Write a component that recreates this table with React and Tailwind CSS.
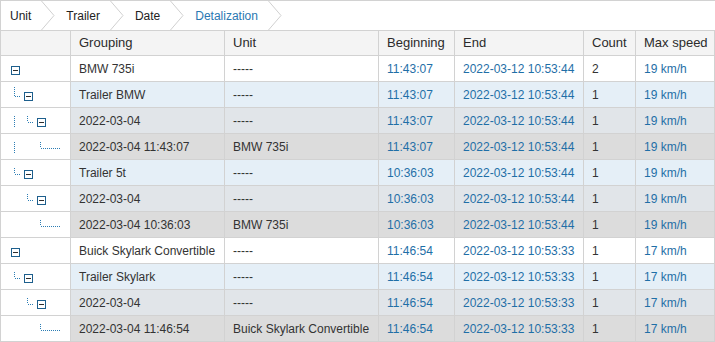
import React from "react";

const rows = [
  { level: 0, name: "BMW 735i", unit: "-----", begin: "11:43:07", end: "2022-03-12 10:53:44", count: "2", speed: "19 km/h", last: false, cont: [] },
  { level: 1, name: "Trailer BMW", unit: "-----", begin: "11:43:07", end: "2022-03-12 10:53:44", count: "1", speed: "19 km/h", last: false, cont: [] },
  { level: 2, name: "2022-03-04", unit: "-----", begin: "11:43:07", end: "2022-03-12 10:53:44", count: "1", speed: "19 km/h", last: true, cont: [1] },
  { level: 3, name: "2022-03-04 11:43:07", unit: "BMW 735i", begin: "11:43:07", end: "2022-03-12 10:53:44", count: "1", speed: "19 km/h", last: true, cont: [1] },
  { level: 1, name: "Trailer 5t", unit: "-----", begin: "10:36:03", end: "2022-03-12 10:53:44", count: "1", speed: "19 km/h", last: true, cont: [] },
  { level: 2, name: "2022-03-04", unit: "-----", begin: "10:36:03", end: "2022-03-12 10:53:44", count: "1", speed: "19 km/h", last: true, cont: [] },
  { level: 3, name: "2022-03-04 10:36:03", unit: "BMW 735i", begin: "10:36:03", end: "2022-03-12 10:53:44", count: "1", speed: "19 km/h", last: true, cont: [] },
  { level: 0, name: "Buick Skylark Convertible", unit: "-----", begin: "11:46:54", end: "2022-03-12 10:53:33", count: "1", speed: "17 km/h", last: true, cont: [] },
  { level: 1, name: "Trailer Skylark", unit: "-----", begin: "11:46:54", end: "2022-03-12 10:53:33", count: "1", speed: "17 km/h", last: true, cont: [] },
  { level: 2, name: "2022-03-04", unit: "-----", begin: "11:46:54", end: "2022-03-12 10:53:33", count: "1", speed: "17 km/h", last: true, cont: [] },
  { level: 3, name: "2022-03-04 11:46:54", unit: "Buick Skylark Convertible", begin: "11:46:54", end: "2022-03-12 10:53:33", count: "1", speed: "17 km/h", last: true, cont: [] },
];

const bgByLevel = ["bg-white", "bg-[#e5eff7]", "bg-[#e1e5e9]", "bg-[#dcdcdc]"];

const DOT = "#2c7db4";

function TreeIcon({ level, last, cont }) {
  const leaf = level === 3;
  const vx = 13 * level;
  const bx = 10 + 13 * level;
  return (
    <svg width="69" height="25" viewBox="0 0 69 25" shapeRendering="crispEdges">
      {cont.map((k) => (
        <line key={k} x1={13 * k + 0.5} x2={13 * k + 0.5} y1="8" y2="20" stroke={DOT} strokeDasharray="1 1" />
      ))}
      {level > 0 && (
        <>
          <line x1={vx + 0.5} x2={vx + 0.5} y1={last ? 8 : 5} y2="14" stroke={DOT} strokeDasharray="1 1" />
          <line x1={vx + 1} x2={vx + (leaf ? 21 : 7)} y1="14.5" y2="14.5" stroke={DOT} strokeDasharray="1 1" />
        </>
      )}
      {!leaf && (
        <>
          <rect x={bx + 0.5} y="10.5" width="8" height="8" fill="#ffffff" stroke="#1d5f8d" />
          <rect x={bx + 2} y="14" width="5" height="1" fill="#2e2e2e" />
        </>
      )}
    </svg>
  );
}

const crumbs = ["Unit", "Trailer", "Date", "Detalization"];

export default function App() {
  return (
    <div className="w-[715px] h-[342px] bg-white border-l border-[#d2d2d2] font-['Liberation_Sans',Arial,sans-serif] text-[12px] text-[#333333] overflow-hidden">
      <div className="flex h-[30px] border-t border-[#d2d2d2]">
        {crumbs.map((c, i) => (
          <div key={c} className="flex h-full items-stretch">
            <span
              className={`flex items-center pr-[10px] ${i === 0 ? "pl-[9px]" : "pl-[11px]"} ${
                i === 3 ? "text-[#2a78b2]" : "text-[#222222]"
              }`}
            >
              {c}
            </span>
            <svg width="14" height="29" viewBox="0 0 14 29" className="block">
              <polyline points="0.5,0 13,14.5 0.5,29" fill="none" stroke="#d0d0d0" strokeWidth="1" />
            </svg>
          </div>
        ))}
      </div>
      <div className="grid grid-cols-[70px_154px_154px_76px_129px_52px_79px]">
        {["", "Grouping", "Unit", "Beginning", "End", "Count", "Max speed"].map((h, i) => (
          <div
            key={i}
            className="h-[26px] flex items-center pl-2 bg-[#f4f4f4] border-t border-b border-r border-[#d2d2d2] text-[13px] text-[#2b2b2b] whitespace-nowrap"
          >
            {h}
          </div>
        ))}
        {rows.map((r, idx) => {
          const bg = bgByLevel[r.level];
          return (
            <React.Fragment key={idx}>
              <div className="h-[26px] bg-white border-b border-r border-[#d2d2d2] overflow-hidden">
                <TreeIcon level={r.level} last={r.last} cont={r.cont} />
              </div>
              <div className={`h-[26px] flex items-center pl-2 whitespace-nowrap border-b border-r border-[#d2d2d2] ${bg}`}>{r.name}</div>
              <div className={`h-[26px] flex items-center pl-2 whitespace-nowrap border-b border-r border-[#d2d2d2] ${bg}`}>{r.unit}</div>
              <div className={`h-[26px] flex items-center pl-2 whitespace-nowrap border-b border-r border-[#d2d2d2] text-[#1f6fa7] ${bg}`}>{r.begin}</div>
              <div className={`h-[26px] flex items-center pl-2 whitespace-nowrap border-b border-r border-[#d2d2d2] text-[#1f6fa7] ${bg}`}>{r.end}</div>
              <div className={`h-[26px] flex items-center pl-2 whitespace-nowrap border-b border-r border-[#d2d2d2] ${bg}`}>{r.count}</div>
              <div className={`h-[26px] flex items-center pl-2 whitespace-nowrap border-b border-r border-[#d2d2d2] text-[#1f6fa7] ${bg}`}>{r.speed}</div>
            </React.Fragment>
          );
        })}
      </div>
    </div>
  );
}
